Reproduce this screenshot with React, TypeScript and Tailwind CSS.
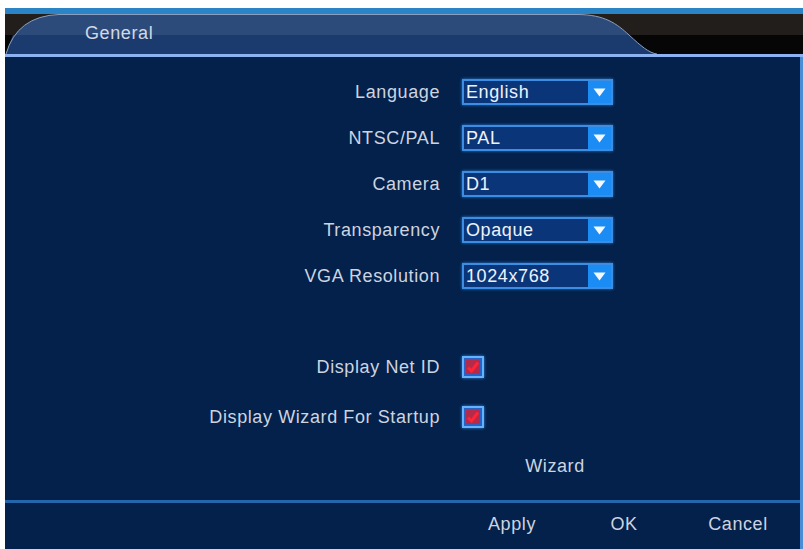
import React from 'react';

const font = { fontFamily: '"Liberation Sans", Arial, sans-serif' };

const selects = [
  { label: 'Language', value: 'English' },
  { label: 'NTSC/PAL', value: 'PAL' },
  { label: 'Camera', value: 'D1' },
  { label: 'Transparency', value: 'Opaque' },
  { label: 'VGA Resolution', value: '1024x768' },
];

const checks = ['Display Net ID', 'Display Wizard For Startup'];

const Dropdown = ({ value }: { value: string }) => (
  <div className="flex h-[26px] w-[151px] border-2 border-[#3d8de2] bg-[#0a3679] shadow-[0_0_3px_#2a7ad0]">
    <div className="flex-1 pl-[2px] text-[18px] leading-[22px] text-[#eef2fa] tracking-[0.6px]">{value}</div>
    <div className="flex w-[23px] items-center justify-center bg-[#1b8cf3]">
      <svg width="13" height="9" viewBox="0 0 13 9">
        <path d="M0.5 0.5 H12.5 L6.5 8.5 Z" fill="#f4f8ff" />
      </svg>
    </div>
  </div>
);

const Checkbox = () => (
  <div className="flex h-[22px] w-[22px] items-center justify-center border-2 border-[#62b2ff] bg-[#2a62c4] shadow-[0_0_3px_#3a8ae0]">
    <svg width="16" height="16" viewBox="0 0 16 16">
      <rect x="1" y="1" width="14" height="14" fill="#b42a4a" />
      <path d="M3 8.5 L6.5 12 L13 3.5" stroke="#ff2436" strokeWidth="3" fill="none" />
    </svg>
  </div>
);

// dark strip with the blue tab drawn on it
const HeaderShape = () => (
  <svg className="absolute left-0 top-0" width="798" height="40" viewBox="0 0 798 40">
    <rect x="0" y="0" width="798" height="21" fill="#211e1c" />
    <rect x="0" y="21" width="798" height="19" fill="#060606" />
    <path
      d="M1 40 Q 12 2 54 0.5 L 572 0.5 C 600 0.5 612 10 624 21 L 1 21 Z"
      fill="#2c4b7b"
    />
    <path d="M0 21 L 624 21 C 636 32 644 39 652 40 L 0 40 Z" fill="#1b3b6f" />
    <path d="M1 40 Q 4 30 8 21 L 0 21 L 0 40 Z" fill="#060606" />
    <path
      d="M1 40 Q 12 2 54 0.5 L 572 0.5 C 600 0.5 612 10 624 21 C 636 32 644 39 652 40"
      fill="none"
      stroke="#8b9fbe"
      strokeWidth="1"
    />
  </svg>
);

export default function App() {
  return (
    <div className="flex h-[549px] w-[803px] flex-col bg-white pl-[5px] pt-[8px]" style={font}>
      <div className="h-[6px] shrink-0 bg-[#2a84c6]" />
      <div className="relative h-[40px] shrink-0 bg-[#211e1c]">
        <HeaderShape />
        <div className="relative pl-[80px] pt-[7px] text-[18px] leading-[24px] tracking-[0.6px] text-[#d3d9e4]">
          General
        </div>
      </div>
      <div className="h-[3px] shrink-0 bg-[#8cb2f2]" />

      <div className="flex flex-1 flex-col border-r-[3px] border-[#4b8cd6] bg-[#03214a] pt-[12px] text-[18px] tracking-[0.6px] text-[#cdd4e0]">
        {selects.map((s) => (
          <div key={s.label} className="flex h-[46px] items-center">
            <div className="w-[435px] text-right">{s.label}</div>
            <div className="ml-[22px]">
              <Dropdown value={s.value} />
            </div>
          </div>
        ))}

        <div className="mt-[43px]">
          {checks.map((c) => (
            <div key={c} className="flex h-[50px] items-center">
              <div className="w-[435px] text-right">{c}</div>
              <div className="ml-[22px]">
                <Checkbox />
              </div>
            </div>
          ))}
        </div>

        <div className="flex h-[48px] items-center">
          <div className="ml-[500px] w-[100px] text-center">Wizard</div>
        </div>
      </div>

      <div className="h-[3px] shrink-0 border-r-[3px] border-[#4b8cd6] bg-[#2466ab]" />
      <div className="flex h-[46px] shrink-0 items-center justify-end border-r-[3px] border-[#4b8cd6] bg-[#03214a] pb-[4px] pr-[12px] text-[18px] tracking-[0.6px] text-[#cdd4e0]">
        <div className="w-[100px] text-center">Apply</div>
        <div className="ml-[12px] w-[100px] text-center">OK</div>
        <div className="ml-[14px] w-[100px] text-center">Cancel</div>
      </div>
    </div>
  );
}
